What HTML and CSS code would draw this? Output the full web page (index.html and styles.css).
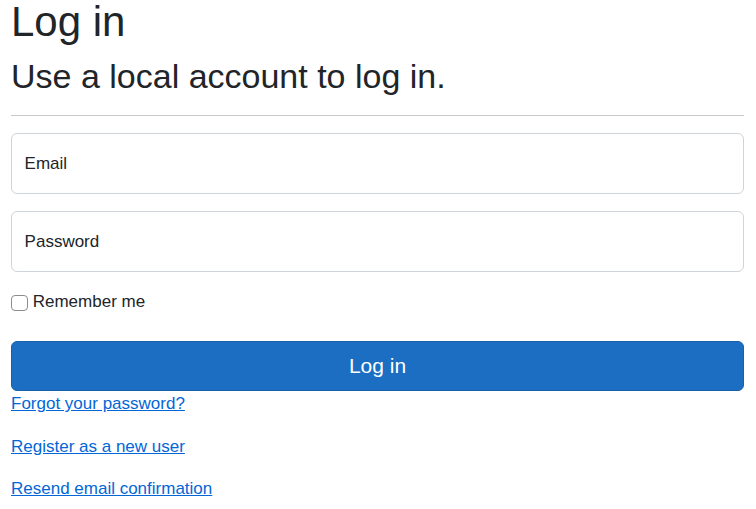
FILE: index.html
```html
<!DOCTYPE html>
<html lang="en">
<head>
<meta charset="utf-8">
<title>Log in</title>
<link rel="stylesheet" href="styles.css">
</head>
<body>
<main class="page">
  <h1 class="title">Log in</h1>
  <section class="login">
    <form class="form" action="#" method="post">
      <h2 class="subtitle">Use a local account to log in.</h2>
      <hr class="rule">
      <div class="field">
        <input class="field-input" type="email" id="email" autocomplete="username">
        <label class="field-label" for="email">Email</label>
      </div>
      <div class="field">
        <input class="field-input" type="password" id="password" autocomplete="current-password">
        <label class="field-label" for="password">Password</label>
      </div>
      <div class="remember">
        <label class="remember-label"><input class="check" type="checkbox"> Remember me</label>
      </div>
      <div>
        <button class="submit" type="submit">Log in</button>
      </div>
      <div class="links">
        <p class="link-row"><a class="link" href="#">Forgot your password?</a></p>
        <p class="link-row"><a class="link" href="#">Register as a new user</a></p>
        <p class="link-row"><a class="link" href="#">Resend email confirmation</a></p>
      </div>
    </form>
  </section>
</main>
</body>
</html>
```
FILE: styles.css
```css
html {
  font-size: 16.8px;
}

body {
  margin: 0;
  background: #fff;
  color: #212529;
  font-family: "Liberation Sans", Arial, sans-serif;
  font-size: 17px;
  line-height: 1.5;
}

.page {
  padding: 1px 12px 0 11px;
}

.title {
  margin: 0;
  font-size: 42px;
  font-weight: 400;
  line-height: 42px;
}

.subtitle {
  margin: 13px 0 0;
  font-size: 34px;
  font-weight: 400;
  line-height: 40px;
}

.rule {
  height: 0;
  margin: 19px 0 17px;
  border: 0;
  border-top: 1px solid #c8c9ca;
}

.field {
  position: relative;
  margin-bottom: 17px;
}

.field-input {
  display: block;
  box-sizing: border-box;
  width: 100%;
  height: 61px;
  margin: 0;
  padding: 16.8px 12.6px;
  border: 1px solid #ced4da;
  border-radius: 6px;
  background: #fff;
  color: #212529;
  font: inherit;
}

.field-label {
  position: absolute;
  top: 0;
  left: 0;
  padding: 17.8px 13.6px;
  line-height: 25.2px;
  pointer-events: none;
}

.remember {
  margin-bottom: 18px;
}

.remember-label {
  display: inline-block;
  margin-bottom: 8.4px;
  line-height: 25.2px;
}

.check {
  appearance: none;
  -webkit-appearance: none;
  box-sizing: border-box;
  width: 17px;
  height: 16px;
  margin: 6px 0 0;
  vertical-align: top;
  border: 1px solid #8a8c8f;
  border-radius: 4px;
  background: #fff;
}

.submit {
  display: block;
  box-sizing: border-box;
  width: 100%;
  padding: 8.4px 16.8px;
  border: 1px solid #1861ac;
  border-radius: 6px;
  background: #1b6ec2;
  color: #fff;
  font-family: inherit;
  font-size: 21px;
  line-height: 1.5;
}

.links {
  padding-top: 0.5px;
}

.link-row {
  margin: 0 0 17px;
  line-height: 25.5px;
}

.link {
  color: #0366d6;
  text-decoration: underline;
}
```
